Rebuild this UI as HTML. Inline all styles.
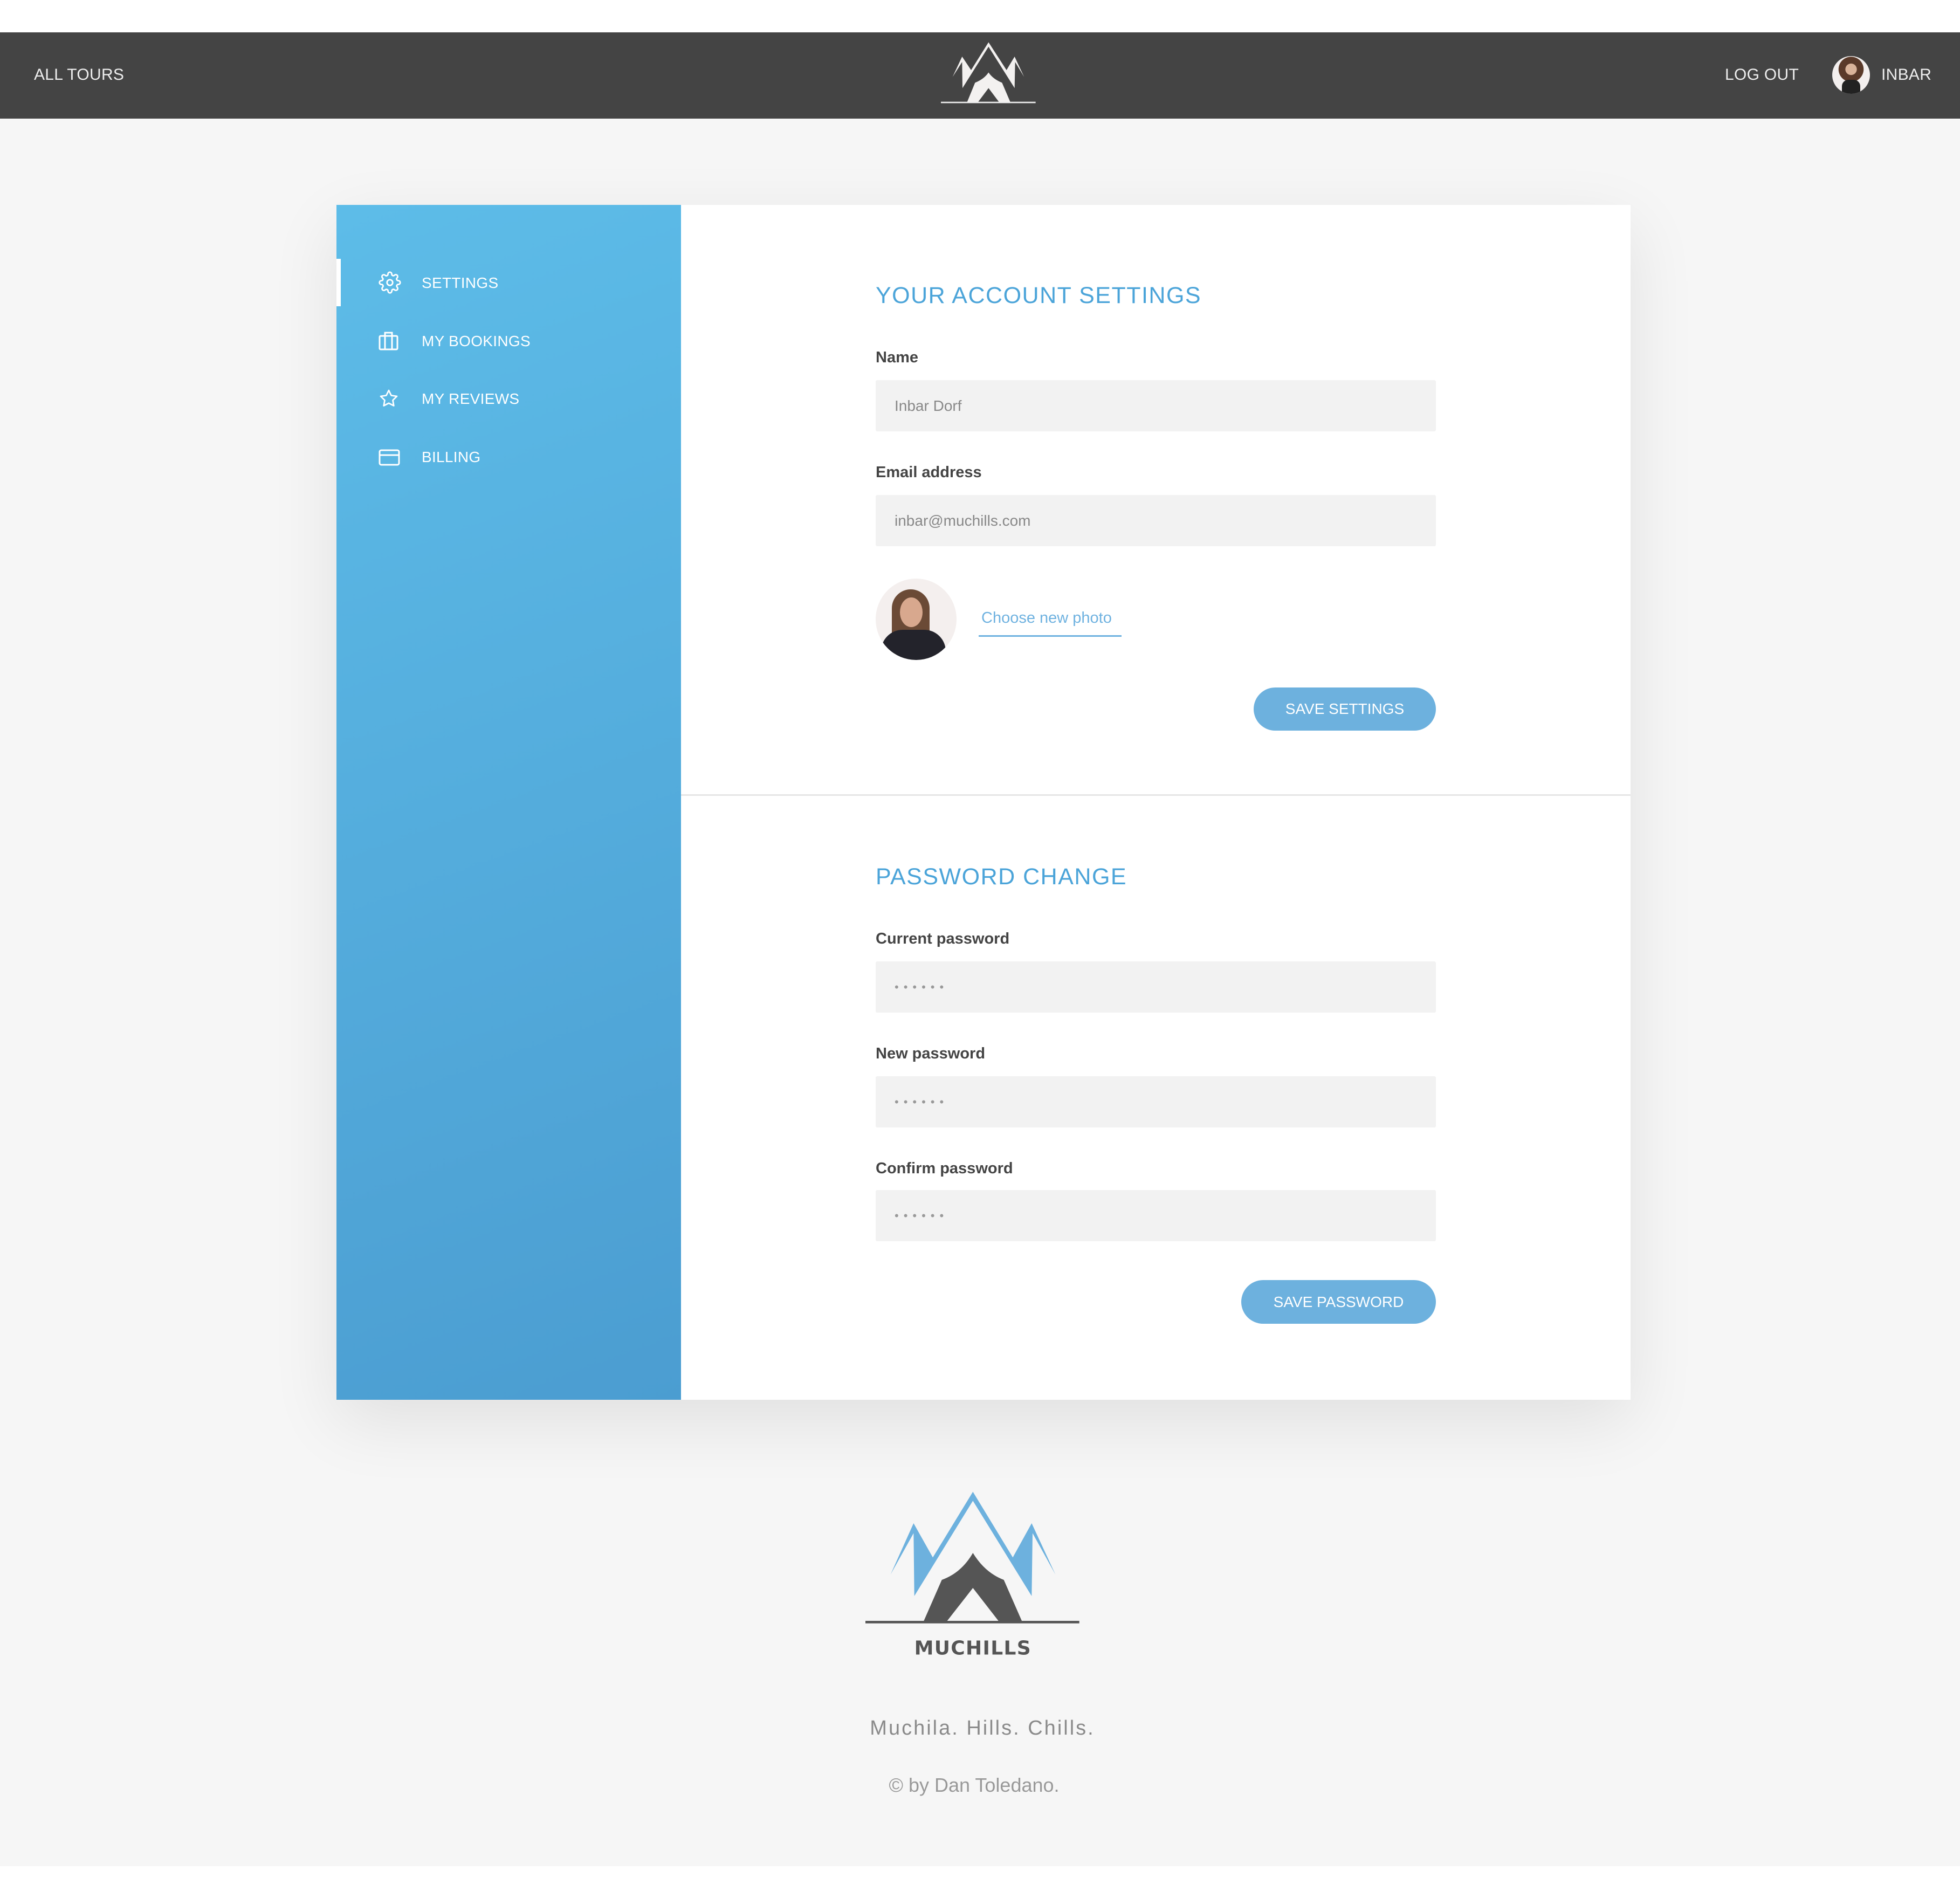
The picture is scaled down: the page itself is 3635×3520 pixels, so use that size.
<!DOCTYPE html>
<html><head><meta charset="utf-8"><style>
*{margin:0;padding:0;box-sizing:border-box}
body{width:3635px;height:3520px;background:#fff;font-family:"Liberation Sans",sans-serif;position:relative;overflow:hidden}
.a{position:absolute;white-space:nowrap}
#bg{left:0;top:220px;width:3635px;height:3241px;background:#f6f6f6}
#hdr{left:0;top:60px;width:3635px;height:160px;background:#444}
.hl{color:#eee;font-size:30px;top:122px;letter-spacing:0.3px}
#card{left:624px;top:380px;width:2400px;height:2216px;background:#fff;box-shadow:0 40px 120px rgba(0,0,0,0.09)}
#side{left:624px;top:380px;width:639px;height:2216px;background:linear-gradient(160deg,#5dbce8,#4b9dd1)}
.mi{color:#fff;font-size:28px;left:782px;letter-spacing:0.3px}
.ic{left:702px}
h2{position:absolute;left:1624px;font-size:43px;font-weight:normal;color:#4ba4d9;letter-spacing:1.5px;white-space:nowrap}
.lb{left:1624px;font-size:29px;font-weight:bold;color:#444}
.in{left:1624px;width:1039px;height:95px;background:#f2f2f2;border-radius:3px;color:#888;font-size:28px;padding-left:35px;line-height:95px}
.dots{letter-spacing:9px;font-size:22px;color:#999}
.btn{background:#6db1de;color:#fff;font-size:28px;border-radius:50px;text-align:center}
</style></head><body>
<div id="bg" class="a"></div>
<div id="hdr" class="a"></div>
<div class="a hl" style="left:63px">ALL TOURS</div>
<div class="a hl" style="left:3199px">LOG OUT</div>
<div class="a" style="left:3398px;top:104px;width:70px;height:70px;border-radius:50%;background:radial-gradient(circle at 50% 35%,#d9b39a 0 18%,#5a3a2a 19% 40%,#f3efee 41%);overflow:hidden"><div class="a" style="left:18px;top:44px;width:34px;height:30px;background:#222;border-radius:12px 12px 0 0"></div></div>
<div class="a hl" style="left:3489px">INBAR</div>
<svg class="a" style="left:1600px;top:40px" width="400" height="200" viewBox="0 0 1200 600">
<path fill="#f3f1f0" d="M500 308 L553 195 L603 270 L700 115 L800 270 L845 195 L898 308 L848 225 L845 370 L700 140 L555 370 L553 225 Z"/>
<path fill="#f3f1f0" d="M580 450 L625 340 Q675 320 700 283 Q725 320 775 340 L822 450 L760 450 L700 370 L640 450 Z"/>
<rect x="435" y="446" width="527" height="8" fill="#eee"/>
</svg>

<div id="card" class="a"></div>
<div id="side" class="a"></div>
<div class="a" style="left:624px;top:480px;width:8px;height:88px;background:#fff"></div>
<svg class="a ic" style="top:503px" width="42" height="42" viewBox="0 0 24 24" fill="none" stroke="#fff" stroke-width="1.6"><circle cx="12" cy="12" r="3"/><path d="M19.4 15a1.65 1.65 0 0 0 .33 1.820l.06.06a2 2 0 1 1-2.830 2.830l-.06-.06a1.65 1.65 0 0 0-1.820-.33 1.65 1.65 0 0 0-1 1.510V21a2 2 0 1 1-4 0v-.09A1.65 1.65 0 0 0 9 19.4a1.65 1.65 0 0 0-1.820.33l-.06.06a2 2 0 1 1-2.830-2.830l.06-.06A1.65 1.65 0 0 0 4.68 15a1.65 1.65 0 0 0-1.510-1H3a2 2 0 1 1 0-4h.09A1.65 1.65 0 0 0 4.6 9a1.65 1.65 0 0 0-.33-1.820l-.06-.06a2 2 0 1 1 2.830-2.830l.06.06A1.65 1.65 0 0 0 9 4.68a1.65 1.65 0 0 0 1-1.510V3a2 2 0 1 1 4 0v.09a1.65 1.65 0 0 0 1 1.510 1.65 1.65 0 0 0 1.820-.33l.06-.06a2 2 0 1 1 2.830 2.830l-.06.06A1.65 1.65 0 0 0 19.4 9a1.65 1.65 0 0 0 1.510 1H21a2 2 0 1 1 0 4h-.09a1.65 1.65 0 0 0-1.510 1z"/></svg>
<div class="a mi" style="top:509px">SETTINGS</div>
<svg class="a ic" style="top:614px" width="38" height="36" viewBox="0 0 38 36" fill="none" stroke="#fff" stroke-width="3"><rect x="2" y="9" width="33" height="25" rx="2"/><path d="M12 34V9M25 34V9M12 9V3h13v6"/></svg>
<div class="a mi" style="top:617px">MY BOOKINGS</div>
<svg class="a ic" style="top:721px" width="38" height="36" viewBox="0 0 24 24" fill="none" stroke="#fff" stroke-width="1.8" stroke-linejoin="round"><path d="M12 2l3.1 6.3 6.9 1-5 4.9 1.2 6.8L12 17.8 5.8 21l1.2-6.8-5-4.9 6.9-1z"/></svg>
<div class="a mi" style="top:724px">MY REVIEWS</div>
<svg class="a ic" style="top:833px" width="40" height="32" viewBox="0 0 40 32" fill="none" stroke="#fff" stroke-width="3"><rect x="2" y="2" width="36" height="27" rx="3"/><path d="M2 11h36"/></svg>
<div class="a mi" style="top:832px">BILLING</div>

<h2 style="top:524px">YOUR ACCOUNT SETTINGS</h2>
<div class="a lb" style="top:647px">Name</div>
<div class="a in" style="top:705px">Inbar Dorf</div>
<div class="a lb" style="top:860px">Email address</div>
<div class="a in" style="top:918px">inbar@muchills.com</div>
<div class="a" style="left:1624px;top:1073px;width:150px;height:151px;border-radius:50%;background:#f4efee;overflow:hidden">
<div class="a" style="left:30px;top:20px;width:70px;height:110px;background:#6b4a36;border-radius:35px 35px 10px 10px"></div>
<div class="a" style="left:45px;top:35px;width:42px;height:55px;background:#d8a88e;border-radius:50%"></div>
<div class="a" style="left:10px;top:95px;width:120px;height:70px;background:#23232b;border-radius:40px 40px 0 0"></div>
</div>
<div class="a" style="left:1820px;top:1130px;font-size:29px;color:#6fb2e0">Choose new photo</div>
<div class="a" style="left:1815px;top:1178px;width:265px;height:3px;background:#6fb2e0"></div>
<div class="a btn" style="left:2325px;top:1275px;width:338px;height:80px;line-height:80px">SAVE SETTINGS</div>

<div class="a" style="left:1263px;top:1473px;width:1761px;height:3px;background:#e6e6e6"></div>

<h2 style="top:1602px">PASSWORD CHANGE</h2>
<div class="a lb" style="top:1725px">Current password</div>
<div class="a in dots" style="top:1783px">••••••</div>
<div class="a lb" style="top:1938px">New password</div>
<div class="a in dots" style="top:1996px">••••••</div>
<div class="a lb" style="top:2151px">Confirm password</div>
<div class="a in dots" style="top:2207px">••••••</div>
<div class="a btn" style="left:2302px;top:2374px;width:361px;height:81px;line-height:81px">SAVE PASSWORD</div>

<svg class="a" style="left:1550px;top:2700px" width="500" height="400" viewBox="0 0 1500 1200">
<path fill="#6db1de" d="M305 660 L433 375 L540 565 L763 200 L985 565 L1090 375 L1222 660 L1095 430 L1090 780 L763 250 L437 780 L433 430 Z"/>
<path fill="#555" d="M490 918 L590 690 Q700 650 763 540 Q830 650 935 690 L1035 918 L905 918 L763 735 L620 918 Z"/>
<rect x="165" y="918" width="1190" height="14" fill="#555"/>
<text x="763" y="1105" text-anchor="middle" font-family="DejaVu Sans, sans-serif" font-weight="bold" font-size="108" fill="#555" letter-spacing="4">MUCHILLS</text>
</svg>
<div class="a" style="left:1504px;top:3184px;width:636px;text-align:center;font-size:38px;color:#8a8a8a;letter-spacing:3px">Muchila. Hills. Chills.</div>
<div class="a" style="left:1500px;top:3290px;width:613px;text-align:center;font-size:36px;color:#999">© by Dan Toledano.</div>
</body></html>
